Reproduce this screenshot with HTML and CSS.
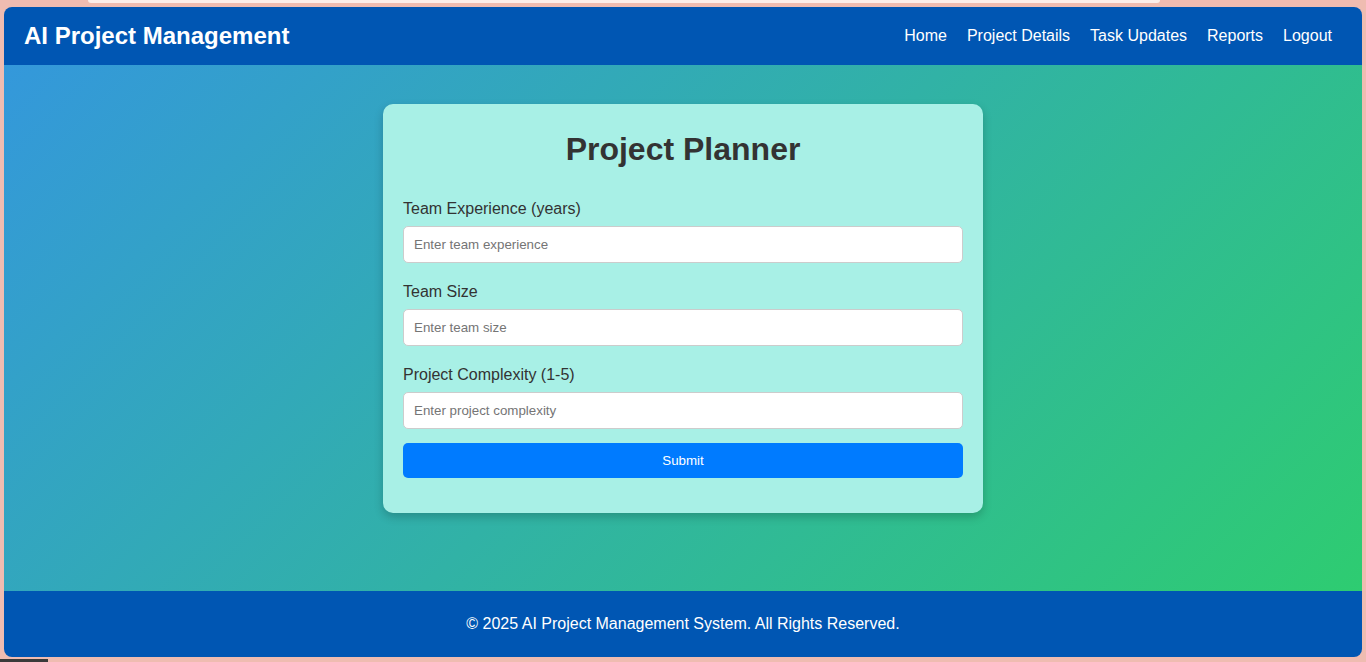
FILE: index.html
```html
<!DOCTYPE html>
<html lang="en">
<head>
<meta charset="utf-8">
<title>AI Project Management</title>
<link rel="stylesheet" href="styles.css">
</head>
<body>
<div class="topstrip"></div>
<div class="window">
  <header class="header">
    <div class="brand">AI Project Management</div>
    <nav class="nav">
      <a href="#">Home</a>
      <a href="#">Project Details</a>
      <a href="#">Task Updates</a>
      <a href="#">Reports</a>
      <a href="#">Logout</a>
    </nav>
  </header>
  <main class="main">
    <div class="card">
      <h2 class="title">Project Planner</h2>
      <div class="group">
        <label class="label">Team Experience (years)</label>
        <input class="input" type="text" placeholder="Enter team experience">
      </div>
      <div class="group">
        <label class="label">Team Size</label>
        <input class="input" type="text" placeholder="Enter team size">
      </div>
      <div class="group group-last">
        <label class="label">Project Complexity (1-5)</label>
        <input class="input" type="text" placeholder="Enter project complexity">
      </div>
      <div class="actions">
        <button class="button" type="button">Submit</button>
      </div>
    </div>
  </main>
  <footer class="footer">© 2025 AI Project Management System. All Rights Reserved.</footer>
</div>
<div class="bottomstrip"></div>
</body>
</html>
```
FILE: styles.css
```css
html, body {
  margin: 0;
  padding: 0;
}
body {
  height: 662px;
  overflow: hidden;
  background: #efbcb1;
  font-family: "Liberation Sans", Arial, sans-serif;
}
.topstrip {
  height: 3px;
  width: 1072px;
  margin-left: 88px;
  background: #fbeeea;
  border-radius: 0 0 6px 6px;
}
.window {
  margin: 4px 4px 0 4px;
  height: 650px;
  display: flex;
  flex-direction: column;
  border-radius: 8px;
  overflow: hidden;
}
.header {
  background: #0056b3;
  color: #fff;
  height: 58px;
  box-sizing: border-box;
  padding: 0 20px;
  display: flex;
  align-items: center;
  justify-content: space-between;
}
.brand {
  font-size: 24px;
  font-weight: bold;
}
.nav {
  display: flex;
}
.nav a {
  color: #fff;
  text-decoration: none;
  font-size: 16px;
  margin: 0 10px;
}
.main {
  flex: 1;
  background: linear-gradient(135deg, #3498db, #2ecc71);
  display: flex;
  justify-content: center;
  align-items: flex-start;
}
.card {
  margin-top: 39px;
  width: 600px;
  box-sizing: border-box;
  padding: 20px;
  background: #a8f0e6;
  border-radius: 10px;
  box-shadow: 0 4px 10px rgba(0, 0, 0, 0.2);
}
.title {
  margin: 7px 0 32px;
  text-align: center;
  font-size: 32px;
  line-height: 37px;
  color: #333;
}
.group {
  margin-bottom: 20px;
}
.group-last {
  margin-bottom: 14px;
}
.actions {
  padding-bottom: 15px;
}
.label {
  display: block;
  font-size: 16px;
  line-height: 18px;
  color: #333;
  margin-bottom: 8px;
}
.input {
  display: block;
  width: 100%;
  box-sizing: border-box;
  height: 37px;
  padding: 10px;
  border: 1px solid #ccc;
  border-radius: 5px;
  background: #fff;
  font-family: "Liberation Sans", Arial, sans-serif;
  font-size: 13.33px;
}
.input::placeholder {
  color: #757575;
}
.button {
  display: block;
  width: 100%;
  height: 35px;
  border: none;
  border-radius: 5px;
  background: #007bff;
  color: #fff;
  font-family: "Liberation Sans", Arial, sans-serif;
  font-size: 13.33px;
}
.footer {
  background: #0056b3;
  color: #fff;
  height: 66px;
  display: flex;
  align-items: center;
  justify-content: center;
  font-size: 16px;
}
.bottomstrip {
  margin-top: 2px;
  width: 48px;
  height: 3px;
  background: #3a3a3a;
}
```
